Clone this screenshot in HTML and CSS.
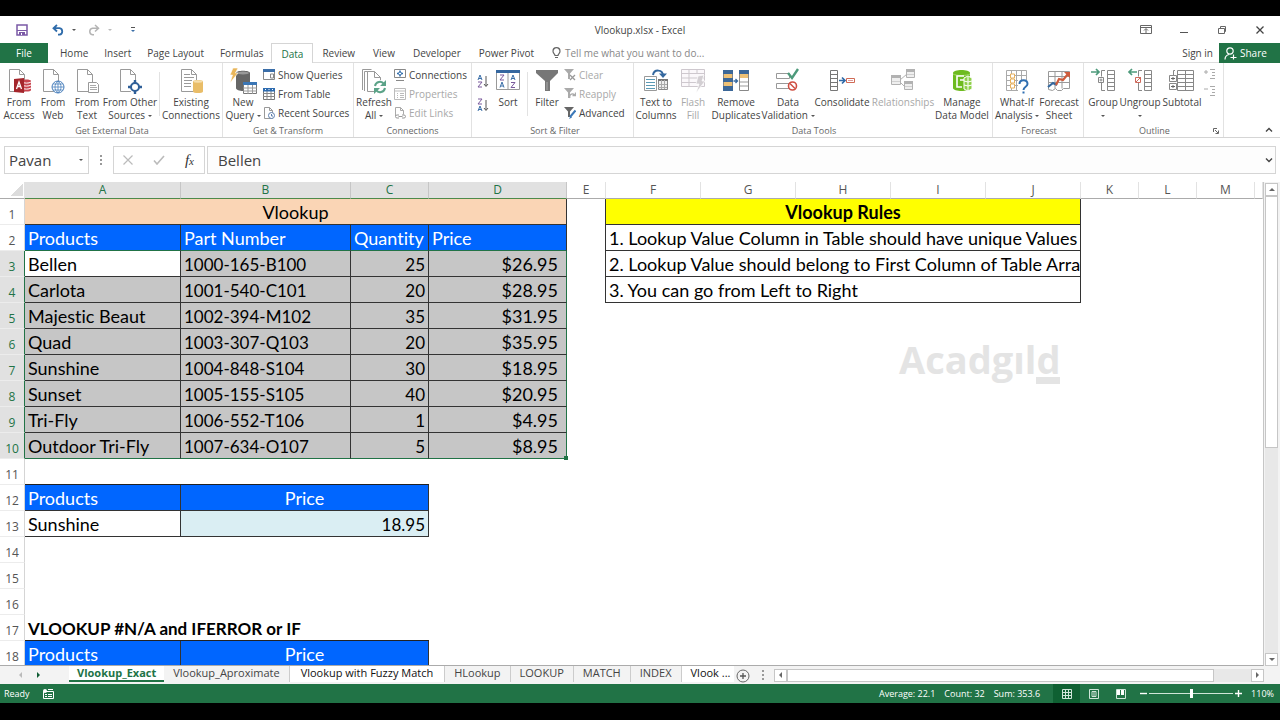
FILE: index.html
```html
<!DOCTYPE html>
<html lang="en">
<head>
    <meta charset="UTF-8">
    <title>Vlookup.xlsx - Excel</title>
    <link rel="stylesheet" href="styles.css">
</head>
<body>

<!-- shared shapes -->
<svg class="defs" width="0" height="0">
    <symbol id="page" viewBox="0 0 24 26">
        <path d="M2.5 1.5h10l5 5v17h-15z" fill="#fff" stroke="#9a9a9a"/>
        <path d="M12.500 1.500v5h5" fill="none" stroke="#9a9a9a"/>
    </symbol>
    <symbol id="mini-grid" viewBox="0 0 14 12">
        <path d="M.5.5h13v11H.5z" fill="#fff" stroke="#777"/>
        <path d="M0 0h14v3H0z" fill="#3b76b5"/>
        <path d="M5 3v9M9.500 3v9M0 6h14M0 9h14" stroke="#999" fill="none"/>
    </symbol>
    <symbol id="funnel" viewBox="0 0 24 26">
        <path d="M1 2h22v3l-8 8v10h-5V13L1 5z" fill="#777"/>
        <path d="M12 14v8" stroke="#aaa"/>
    </symbol>
</svg>

<header class="titlebar">
    <div class="quick">
        <button aria-label="Save"><svg width="12" height="12" viewBox="0 0 12 12"><path d="M1 1h10v10H1z" fill="#fff" stroke="#7b5aa6" stroke-width="1.500"/><path d="M1 6h10v1H1zM3 8h6v3H3z" fill="#7b5aa6"/><path d="M5 9h1v2H5z" fill="#fff"/></svg></button>
        <button class="undo" aria-label="Undo"><svg width="12" height="12" viewBox="0 0 12 12"><path d="M5 1L1.500 4.200 5 7.500M2 4.200h5.500a3.300 3.300 0 010 6.500H6" fill="none" stroke="#2f6cab" stroke-width="1.800"/></svg></button>
        <i class="caret"></i>
        <button class="redo" aria-label="Redo"><svg width="12" height="12" viewBox="0 0 12 12"><path d="M7 1l3.500 3.200L7 7.500M10 4.200H4.500a3.300 3.300 0 000 6.500H6" fill="none" stroke="#b4b4b4" stroke-width="1.500"/></svg></button>
        <i class="caret pale"></i>
        <button class="customize" aria-label="Customize"><svg width="6" height="6" viewBox="0 0 6 6"><path d="M1 .5h4" stroke="#555"/><path d="M1 3h4L3 5z" fill="#3b6fa8"/></svg></button>
    </div>
    <h1>Vlookup.xlsx - Excel</h1>
    <div class="window-buttons">
        <button aria-label="Ribbon options"><svg width="12" height="10" viewBox="0 0 12 10"><path d="M.5.5h11v8H.5zM.5 2.500h11M6 8V4M4 5.500l2-2 2 2" fill="none" stroke="#666"/></svg></button>
        <button aria-label="Minimize"><svg width="10" height="10" viewBox="0 0 10 10"><path d="M1 7.500h8" stroke="#555"/></svg></button>
        <button aria-label="Restore"><svg width="10" height="10" viewBox="0 0 10 10"><path d="M1.500 3.500h6v5h-6zM3.500 3V1.500h5v5H8" fill="none" stroke="#666"/></svg></button>
        <button aria-label="Close"><svg width="10" height="10" viewBox="0 0 10 10"><path d="M1.500 1.500l7 7M8.500 1.500l-7 7" stroke="#444" stroke-width="1.300"/></svg></button>
    </div>
</header>

<nav class="tabs">
    <button class="file">File</button>
    <button>Home</button>
    <button>Insert</button>
    <button>Page Layout</button>
    <button>Formulas</button>
    <button class="active">Data</button>
    <button>Review</button>
    <button>View</button>
    <button>Developer</button>
    <button>Power Pivot</button>
    <button class="tell"><svg width="9" height="12" viewBox="0 0 9 12"><path d="M3 8.500C3 7 1 6.500 1 4.200a3.500 3.500 0 017 0C8 6.500 6 7 6 8.500zM3 10.500h3" fill="none" stroke="#666" stroke-width="1.200"/></svg>Tell me what you want to do...</button>
    <span class="spacer"></span>
    <button class="signin">Sign in</button>
    <button class="share"><svg width="13" height="13" viewBox="0 0 13 13"><circle cx="6" cy="4" r="3.200" fill="none" stroke="#fff" stroke-width="1.200"/><path d="M1 12.500c0-3 2-4.500 4-5M6.500 10.500h6M9.500 7.500v5" fill="none" stroke="#fff" stroke-width="1.200"/></svg>Share</button>
</nav>

<section class="ribbon">
    <div class="group external">
        <div class="tools">
            <button class="big w34">
                <svg width="24" height="26" viewBox="0 0 24 26"><use href="#page"/><path d="M15 13c0-2 9-2 9 0v9c0 2-9 2-9 0z" fill="#c9444f"/><path d="M15 14c2 1.500 7 1.500 9 0M15 17c2 1.500 7 1.500 9 0M15 20c2 1.500 7 1.500 9 0" fill="none" stroke="#fff"/><path d="M7 11l10-1v15l-10-1z" fill="#a4262c"/><path d="M9.500 21l2.500-7 2.500 7M10.500 18.500h3" fill="none" stroke="#fff" stroke-width="1.300"/></svg>
                <span>From</span><span>Access</span>
            </button>
            <button class="big w34">
                <svg width="24" height="26" viewBox="0 0 24 26"><use href="#page"/><circle cx="17" cy="19" r="6" fill="#fff" stroke="#4a80bd"/><path d="M11 19h12M17 13v12M12 16h10M12 22h10M17 13c-4 3-4 9 0 12M17 13c4 3 4 9 0 12" fill="none" stroke="#4a80bd" stroke-width=".8"/></svg>
                <span>From</span><span>Web</span>
            </button>
            <button class="big w34">
                <svg width="24" height="26" viewBox="0 0 24 26"><use href="#page"/><path d="M13.500 14.500h8l2 2v8h-10z" fill="#fff" stroke="#999"/><path d="M15 17.500h6M15 19.500h7M15 21.500h7" stroke="#aaa"/></svg>
                <span>From</span><span>Text</span>
            </button>
            <button class="big w52">
                <svg width="24" height="26" viewBox="0 0 24 26"><use href="#page"/><circle cx="17" cy="19" r="6" fill="#fff"/><path d="M17 12v14M10 19h14" stroke="#2f5f98" stroke-width="2.400"/><circle cx="17" cy="19" r="4" fill="#fff" stroke="#2f5f98" stroke-width="2"/></svg>
                <span>From Other</span><span>Sources <i class="caret"></i></span>
            </button>
            <i class="rule"></i>
            <button class="big w56">
                <svg width="24" height="26" viewBox="0 0 24 26"><use href="#page"/><path d="M5 6.500h6M5 9.500h10M5 12.500h8M5 15.500h7M5 18.500h7" stroke="#999"/><path d="M14 13.500c0-2 10-2 10 0v10c0 2-10 2-10 0z" fill="#e9bd68"/><ellipse cx="19" cy="13.500" rx="4.500" ry="1.200" fill="#f6dfae"/></svg>
                <span>Existing</span><span>Connections</span>
            </button>
        </div>
        <h2>Get External Data</h2>
    </div>
    <div class="group transform">
        <div class="tools">
            <button class="big w40">
                <svg width="28" height="26" viewBox="0 0 28 26"><path d="M7 5c0-3 14-3 14 0v15c0 4-14 4-14 0z" fill="#666"/><ellipse cx="14" cy="5" rx="6" ry="1.500" fill="#999"/><path d="M4 0h5L6.500 5H9L1 15l2.500-8H1z" fill="#e9b65a" stroke="#fff" stroke-width=".6"/><use href="#mini-grid" x="14" y="14" width="14" height="12"/></svg>
                <span>New</span><span>Query <i class="caret"></i></span>
            </button>
            <div class="stack">
                <button><svg width="12" height="12" viewBox="0 0 12 12"><path d="M.5.5h11v10H.5zM7.500 5h3v4h-3z" fill="#fff" stroke="#888"/><path d="M0 0h12v3H0z" fill="#3b6ea8"/></svg>Show Queries</button>
                <button><svg width="12" height="12" viewBox="0 0 12 12"><path d="M.5.5h11v11H.5z" fill="#fff" stroke="#777"/><path d="M4 3v9M8 3v9M0 5.500h12M0 8.500h12" stroke="#888"/><path d="M0 0h12v3.500H0z" fill="#2e6cb0"/><path d="M2 1.500h1M5.500 1.500h1M9 1.500h1" stroke="#fff"/></svg>From Table</button>
                <button><svg width="12" height="12" viewBox="0 0 12 12"><path d="M1.500.5h5l3 3v8h-8zM6.500.5v3h3" fill="#fff" stroke="#999"/><circle cx="8.500" cy="8.500" r="3" fill="#fff" stroke="#5d7fae"/><path d="M8.500 7v2H10" fill="none" stroke="#5d7fae"/></svg>Recent Sources</button>
            </div>
        </div>
        <h2>Get &amp; Transform</h2>
    </div>
    <div class="group connections">
        <div class="tools">
            <button class="big w40">
                <svg width="26" height="26" viewBox="0 0 26 26"><path d="M1.500 22V1.500h9M3.500 23V3.500h9" fill="none" stroke="#999"/><path d="M6.500 3.500h7l6 6v14h-13z" fill="#fff" stroke="#999"/><path d="M13.500 3.500v6h6" fill="none" stroke="#999"/><circle cx="19" cy="19" r="7" fill="#fff"/><path d="M14 18a5 5 0 019-2M24 20a5 5 0 01-9 2" fill="none" stroke="#5ba388" stroke-width="2"/><path d="M25 12v6h-6zM13 26v-6h6z" fill="#5ba388"/></svg>
                <span>Refresh</span><span>All <i class="caret"></i></span>
            </button>
            <div class="stack">
                <button><svg width="12" height="12" viewBox="0 0 12 12"><path d="M.5.5h11v8H.5zM2 11.500h8" fill="#fff" stroke="#888"/><path d="M6 1.500v6M3 4.500h6" stroke="#2f6cab" stroke-width="1.400"/><circle cx="6" cy="4.500" r="1.500" fill="#fff" stroke="#2f6cab"/></svg>Connections</button>
                <button disabled><svg width="12" height="12" viewBox="0 0 12 12"><path d="M.5.5h11v11H.5zM.5 3h11M3 5.500h1M3 7.500h1M3 9.500h1M6 5.500h4M6 7.500h4M6 9.500h4" fill="none" stroke="#bbb"/></svg>Properties</button>
                <button disabled><svg width="12" height="12" viewBox="0 0 12 12"><path d="M1.500 9V.5h5l3 3v4M6.500.5v3h3" fill="none" stroke="#aaa"/><path d="M5 8H3a1.500 1.500 0 000 3h2M8 8h2a1.500 1.500 0 010 3H8M4.500 9.500h4" fill="none" stroke="#999"/></svg>Edit Links</button>
            </div>
        </div>
        <h2>Connections</h2>
    </div>
    <div class="group sort">
        <div class="tools">
            <div class="pair">
                <button aria-label="Sort A to Z"><svg width="12" height="14" viewBox="0 0 12 14"><path d="M1 6l2-5 2 5M1.600 4.500h2.800" fill="none" stroke="#3b6fa8"/><path d="M1 8h4l-4 5h4" fill="none" stroke="#7a5a9c"/><path d="M9 2v10M7 10l2 2.500 2-2.500" fill="none" stroke="#555"/></svg></button>
                <button aria-label="Sort Z to A"><svg width="12" height="14" viewBox="0 0 12 14"><path d="M1 1h4L1 6h4" fill="none" stroke="#7a5a9c"/><path d="M1 13l2-5 2 5M1.600 11.500h2.800" fill="none" stroke="#3b6fa8"/><path d="M9 2v10M7 10l2 2.500 2-2.500" fill="none" stroke="#555"/></svg></button>
            </div>
            <button class="big w34">
                <svg width="24" height="26" viewBox="0 0 24 26"><path d="M.5 2.500h23v19H.5zM12 5v16" fill="#fff" stroke="#999"/><path d="M0 2h24v3H0z" fill="#35679f"/><path d="M4 7h4l-4 5h4M15 14.500h4l-4 5h4" fill="none" stroke="#7a5a9c"/><path d="M4 19.500l2-5.500 2 5.500M4.600 18h2.800M15 12l2-5 2 5M15.600 10.500h2.800" fill="none" stroke="#3b6fa8"/></svg>
                <span>Sort</span>
            </button>
            <i class="rule"></i>
            <button class="big w34">
                <svg width="24" height="26"><use href="#funnel"/></svg>
                <span>Filter</span>
            </button>
            <div class="stack">
                <button disabled><svg width="12" height="12" viewBox="0 0 12 12"><path d="M0 0h10L6 4.500V10H4V4.500z" fill="#aaa"/><path d="M6 6l5 5M11 6l-5 5" stroke="#999" stroke-width="1.300"/></svg>Clear</button>
                <button disabled><svg width="12" height="12" viewBox="0 0 12 12"><path d="M0 0h10L6 4.500V10H4V4.500z" fill="#aaa"/><path d="M11.200 7.500A2.800 2.800 0 106 10M11.500 4.500v3h-3" fill="none" stroke="#aaa" stroke-width="1.300"/></svg>Reapply</button>
                <button><svg width="12" height="12" viewBox="0 0 12 12"><path d="M0 0h10L6 4.500V10H4V4.500z" fill="#666"/><path d="M11.500 3.500L6 10" stroke="#3b78b8" stroke-width="2"/><path d="M6.500 9L5 12l3-1.500z" fill="#3b78b8"/></svg>Advanced</button>
            </div>
        </div>
        <h2>Sort &amp; Filter</h2>
    </div>
    <div class="group data-tools">
        <div class="tools">
            <button class="big w40">
                <svg width="26" height="26" viewBox="0 0 26 26"><path d="M1.500 8.500h12v14h-12z" fill="#fff" stroke="#999"/><path d="M3 11.500h9M3 14.500h9M3 17.500h9M3 20.500h9" stroke="#5b9ab5"/><path d="M15.500 11.500h9v10h-9z" fill="#eee" stroke="#888"/><path d="M15 11h10v2H15z" fill="#777"/><path d="M15 16.500h9M15 19.500h9M18.500 12v9M21.500 12v9" stroke="#aaa"/><path d="M10 7c1-6 10-6 10 1" fill="none" stroke="#34689f" stroke-width="2"/><path d="M16 5.500h8L20 10z" fill="#34689f"/></svg>
                <span>Text to</span><span>Columns</span>
            </button>
            <button class="big w34" disabled>
                <svg width="26" height="26" viewBox="0 0 26 26"><path d="M1.500 1.500h23v17h-23zM1.500 5.500h23M1.500 10h23M1.500 14.500h23M9 1.500v17M17 1.500v4" fill="#fbf8fb" stroke="#c9c3c9"/><path d="M18 8l6-1-2 6h3l-9 12 3-9h-3z" fill="#cfcacf" stroke="#fff" stroke-width=".7"/></svg>
                <span>Flash</span><span>Fill</span>
            </button>
            <button class="big w52">
                <svg width="26" height="26" viewBox="0 0 26 26"><path d="M.5 2.500h9v20h-9zM16.500 2.500h9v20h-9z" fill="#fff" stroke="#888"/><path d="M0 2h10v4H0zM0 10h10v4H0zM0 18h10v5H0zM16 2h10v4H16z" fill="#3b6798"/><path d="M1 6h8v4H1zM1 14h8v4H1zM17 6h8v4h-8z" fill="#edc176"/><path d="M17 14h8M17 18h8" stroke="#999"/><path d="M10.500 13h4M12.500 11l2 2-2 2" fill="none" stroke="#34689f" stroke-width="1.300"/></svg>
                <span>Remove</span><span>Duplicates</span>
            </button>
            <button class="big w52">
                <svg width="26" height="26" viewBox="0 0 26 26"><path d="M1.500 5.500h13v5h-13zM1.500 15.500h13v5h-13z" fill="#fff" stroke="#999"/><path d="M13 5l4 5 6-9" fill="none" stroke="#4d9a7b" stroke-width="2.400"/><circle cx="17.500" cy="18" r="4" fill="#fff" stroke="#cf4e42" stroke-width="1.600"/><path d="M15 15.500l5 5" stroke="#cf4e42" stroke-width="1.500"/></svg>
                <span>Data</span><span>Validation <i class="caret"></i></span>
            </button>
            <button class="big w56">
                <svg width="26" height="26" viewBox="0 0 26 26"><path d="M1.500 2.500h7v20h-7zM1.500 6.500h7M1.500 10.500h7M1.500 14.500h7M1.500 18.500h7" fill="#fff" stroke="#777"/><path d="M10 12.500h6M13 9.500l3 3-3 3" fill="none" stroke="#2f6aa8" stroke-width="1.700"/><path d="M17.500 10.500h8v4h-8z" fill="#fff" stroke="#d06a55"/><path d="M19 12.500h5" stroke="#d99"/></svg>
                <span>Consolidate</span>
            </button>
            <button class="big w66" disabled>
                <svg width="26" height="26" viewBox="0 0 26 26"><path d="M10 12l7-6M10 14l4 4" stroke="#aaa"/><path d="M1.500 7.500h9v9h-9zM16.500 1.500h8v8h-8zM14.500 13.500h8v8h-8z" fill="#eee" stroke="#aaa"/><path d="M1 7h10v3H1zM16 1h9v3h-9zM14 13h9v3h-9z" fill="#aaa"/><path d="M2 13.500h8M17 6.500h7M15 18.500h7" stroke="#ccc"/></svg>
                <span>Relationships</span>
            </button>
            <button class="big w52">
                <svg width="24" height="26" viewBox="0 0 24 26"><path d="M3 5c0-4 17-4 17 0v15c0 4-17 4-17 0z" fill="#6ebb1f"/><path d="M3 6c3 2 14 2 17 0" fill="none" stroke="#a9dc72"/><path d="M14 8h-7v11h5M10 12h5v5" fill="none" stroke="#fff" stroke-width="1.600"/><path d="M14 10l4-2 4 2v11l-4 2-4-2z" fill="#8fd04a" stroke="#fff"/><path d="M14 13l4 1 4-1M14 17l4 1 4-1M18 9v14" fill="none" stroke="#fff"/></svg>
                <span>Manage</span><span>Data Model</span>
            </button>
        </div>
        <h2>Data Tools</h2>
    </div>
    <div class="group forecast">
        <div class="tools">
            <button class="big w44">
                <svg width="24" height="26" viewBox="0 0 24 26"><path d="M1.500 2.500h20v20h-20zM1.500 7.500h20M1.500 12.500h20M1.500 17.500h20M6.500 2.500v20M11.500 2.500v20M16.500 2.500v20" fill="#fff" stroke="#aaa"/><path d="M5.500 6h4v4h-4zM5.500 11h4v4h-4zM5.500 16h4v4h-4z" fill="#fff" stroke="#e8b05c"/><path d="M13 12h10v13H13z" fill="#fff"/><path d="M14.500 16c0-5 8-5 8 0 0 3-4 2.500-4 6" fill="none" stroke="#2f6eb0" stroke-width="2"/><path d="M17.500 23.500h2v2h-2z" fill="#2f6eb0"/></svg>
                <span>What-If</span><span>Analysis <i class="caret"></i></span>
            </button>
            <button class="big w40">
                <svg width="24" height="26" viewBox="0 0 24 26"><path d="M1.500 3.500h21v17h-6l-2 2h-4l-2-2-3 2-4-1zM1.500 8.500h21M1.500 14.500h21M8 3.500v17M15 3.500v17" fill="#fff" stroke="#999"/><path d="M1 19l5-4 4 2" fill="none" stroke="#34689f" stroke-width="2.200"/><path d="M9 17l3-6 4 1 5-6" fill="none" stroke="#cf5c3c" stroke-width="2.200"/><path d="M17 4h6v6z" fill="#cf5c3c"/></svg>
                <span>Forecast</span><span>Sheet</span>
            </button>
        </div>
        <h2>Forecast</h2>
    </div>
    <div class="group outline">
        <div class="tools">
            <button class="big w34">
                <svg width="26" height="26" viewBox="0 0 26 26"><path d="M1 4h8M6 1l3 3-3 3" fill="none" stroke="#4d9a7b" stroke-width="1.700"/><path d="M17.500 2.500h7v20h-7zM17.500 6.500h7M17.500 10.500h7M17.500 14.500h7M17.500 18.500h7M15 2.500h-3.500v6M11.500 15v7.500H15M8.500 9.500h5v5h-5zM9.500 12h3M11 10.500v3" fill="none" stroke="#888"/></svg>
                <span>Group</span><span><i class="caret"></i></span>
            </button>
            <button class="big w40">
                <svg width="26" height="26" viewBox="0 0 26 26"><path d="M2 4h8M5 1L2 4l3 3" fill="none" stroke="#4d9a7b" stroke-width="1.700"/><path d="M17.500 2.500h7v20h-7zM17.500 6.500h7M17.500 10.500h7M17.500 14.500h7M17.500 18.500h7M15 2.500h-3.500v6M11.500 15v7.500H15" fill="none" stroke="#888"/><path d="M8.500 9.500h5v5h-5zM9 14l5-5" fill="none" stroke="#cf6a5c"/></svg>
                <span>Ungroup</span><span><i class="caret"></i></span>
            </button>
            <button class="big w44">
                <svg width="26" height="26" viewBox="0 0 26 26"><path d="M8.500 2.500h16v20h-16zM8.500 6.500h16M8.500 10.500h16M8.500 14.500h16M8.500 18.500h16M16.500 2.500v20M6 2.500H4.500V7" fill="none" stroke="#888"/><path d="M.5 7.500h7v6h-7zM.5 15.500h7v6h-7z" fill="#fff" stroke="#888"/><path d="M2 10.500h4M4 9v3M2 18.500h4M4 17v3" stroke="#666"/></svg>
                <span>Subtotal</span>
            </button>
            <div class="pair detail">
                <button aria-label="Show detail"><svg width="12" height="12" viewBox="0 0 12 12"><path d="M0 4h4M2 2v4M6 1.500h5M8 4.500h3M8 7.500h3M6 10.500h5" stroke="#aaa"/></svg></button>
                <button aria-label="Hide detail"><svg width="12" height="12" viewBox="0 0 12 12"><path d="M0 4h4M6 1.500h5M8 4.500h3M8 7.500h3M6 10.500h5" stroke="#aaa"/></svg></button>
            </div>
        </div>
        <h2>Outline</h2>
        <svg class="launcher" width="6" height="6" viewBox="0 0 6 6"><path d="M.5 4V.5H4M2 2l3 3M5.500 2.500v3h-3" fill="none" stroke="#666"/></svg>
    </div>
    <button class="collapse" aria-label="Collapse ribbon"><svg width="8" height="6" viewBox="0 0 8 6"><path d="M1 4.500l3-3 3 3" fill="none" stroke="#444" stroke-width="1.400"/></svg></button>
</section>

<section class="formula-bar">
    <div class="name-box"><input type="text" value="Pavan" aria-label="Name box"><i class="caret"></i></div>
    <i class="dots"></i>
    <div class="formula-buttons">
        <button aria-label="Cancel"><svg width="10" height="10" viewBox="0 0 10 10"><path d="M.5.5l9 9M9.500.5l-9 9" stroke="#bbb" stroke-width="1.200"/></svg></button>
        <button aria-label="Enter"><svg width="12" height="10" viewBox="0 0 12 10"><path d="M1 5.500L4 9l7-8" fill="none" stroke="#bbb" stroke-width="1.600"/></svg></button>
        <button class="fx">f<small>x</small></button>
    </div>
    <div class="formula">
        <input type="text" value="Bellen" aria-label="Formula">
        <svg width="8" height="6" viewBox="0 0 8 6"><path d="M1 1.500l3 3 3-3" fill="none" stroke="#444" stroke-width="1.400"/></svg>
    </div>
</section>

<main class="workspace">
    <div class="sheet">
        <table>
            <colgroup>
                <col class="c-num"><col class="c-a"><col class="c-b"><col class="c-c"><col class="c-d"><col class="c-e">
                <col class="c-wide"><col class="c-wide"><col class="c-wide"><col class="c-wide"><col class="c-wide">
                <col class="c-std"><col class="c-std"><col class="c-std"><col>
            </colgroup>
            <thead>
                <tr>
                    <th class="corner"></th>
                    <th class="on">A</th><th class="on">B</th><th class="on">C</th><th class="on">D</th>
                    <th>E</th><th>F</th><th>G</th><th>H</th><th>I</th><th>J</th><th>K</th><th>L</th><th>M</th><th></th>
                </tr>
            </thead>
            <tbody>
                <tr><th>1</th><td colspan="4" class="box peach center">Vlookup</td><td class="before"></td><td colspan="5" class="box yellow center bold">Vlookup Rules</td></tr>
                <tr class="head"><th>2</th><td class="box blue">Products</td><td class="box blue">Part Number</td><td class="box blue">Quantity</td><td class="box blue">Price</td><td class="before"></td><td colspan="5" class="box">1. Lookup Value Column in Table should have unique Values</td></tr>
                <tr class="sel"><th>3</th><td class="box current">Bellen</td><td class="box code">1000-165-B100</td><td class="box num">25</td><td class="box money">$26.95</td><td class="before"></td><td colspan="5" class="box rule-cell">2. Lookup Value should belong to First Column of Table Array</td></tr>
                <tr class="sel"><th>4</th><td class="box">Carlota</td><td class="box code">1001-540-C101</td><td class="box num">20</td><td class="box money">$28.95</td><td class="before"></td><td colspan="5" class="box rule-cell">3. You can go from Left to Right</td></tr>
                <tr class="sel"><th>5</th><td class="box">Majestic Beaut</td><td class="box code">1002-394-M102</td><td class="box num">35</td><td class="box money">$31.95</td></tr>
                <tr class="sel"><th>6</th><td class="box">Quad</td><td class="box code">1003-307-Q103</td><td class="box num">20</td><td class="box money">$35.95</td></tr>
                <tr class="sel"><th>7</th><td class="box">Sunshine</td><td class="box code">1004-848-S104</td><td class="box num">30</td><td class="box money">$18.95</td></tr>
                <tr class="sel"><th>8</th><td class="box">Sunset</td><td class="box code">1005-155-S105</td><td class="box num">40</td><td class="box money">$20.95</td></tr>
                <tr class="sel"><th>9</th><td class="box">Tri-Fly</td><td class="box code">1006-552-T106</td><td class="box num">1</td><td class="box money">$4.95</td></tr>
                <tr class="sel last"><th>10</th><td class="box">Outdoor Tri-Fly</td><td class="box code">1007-634-O107</td><td class="box num">5</td><td class="box money handle">$8.95</td></tr>
                <tr class="above"><th>11</th><td></td><td colspan="2"></td></tr>
                <tr><th>12</th><td class="box blue">Products</td><td colspan="2" class="box blue center">Price</td></tr>
                <tr><th>13</th><td class="box">Sunshine</td><td colspan="2" class="box ice num">18.95</td></tr>
                <tr><th>14</th></tr>
                <tr><th>15</th></tr>
                <tr><th>16</th></tr>
                <tr class="above"><th>17</th><td colspan="3" class="bold note">VLOOKUP #N/A and IFERROR or IF</td></tr>
                <tr><th>18</th><td class="box blue">Products</td><td colspan="2" class="box blue center">Price</td></tr>
            </tbody>
        </table>
        <div class="watermark">Acadgıl<span>d</span></div>
    </div>
    <div class="vscroll">
        <button aria-label="Scroll up"><i class="arrow up"></i></button>
        <div class="thumb"></div>
        <div class="trough"></div>
        <button aria-label="Scroll down"><i class="arrow down"></i></button>
    </div>
</main>

<footer class="sheet-tabs">
    <div class="tab-nav"><i class="arrow left pale"></i><i class="arrow right green"></i></div>
    <button class="active">Vlookup_Exact</button>
    <button>Vlookup_Aproximate</button>
    <button class="white">Vlookup with Fuzzy Match</button>
    <button>HLookup</button>
    <button>LOOKUP</button>
    <button>MATCH</button>
    <button>INDEX</button>
    <button class="white more">Vlook ...</button>
    <button class="add" aria-label="New sheet"><svg width="14" height="14" viewBox="0 0 14 14"><circle cx="7" cy="7" r="6" fill="none" stroke="#666"/><path d="M4 7h6M7 4v6" stroke="#555" stroke-width="1.300"/></svg></button>
    <i class="dots"></i>
    <div class="hscroll">
        <button aria-label="Scroll left"><i class="arrow left"></i></button>
        <div class="thumb"></div>
        <div class="trough"></div>
        <button aria-label="Scroll right"><i class="arrow right"></i></button>
    </div>
</footer>

<div class="status">
    <span>Ready</span>
    <svg class="macro" width="11" height="10" viewBox="0 0 11 10"><path d="M.5 2.500h10v7H.5zM2 5.500h2M5 5.500h4M2 7.500h2M5 7.500h4M5 .5h5" fill="none" stroke="#fff"/><circle cx="2" cy="2" r="2" fill="#fff"/></svg>
    <span class="spacer"></span>
    <span class="stat">Average: 22.1</span>
    <span class="stat">Count: 32</span>
    <span class="stat">Sum: 353.6</span>
    <button class="view active" aria-label="Normal"><svg width="10" height="10" viewBox="0 0 10 10"><path d="M.5.5h9v9h-9zM3.500.5v9M6.500.5v9M.5 3.500h9M.5 6.500h9" fill="none" stroke="#cfe5d8"/></svg></button>
    <button class="view" aria-label="Page layout"><svg width="10" height="10" viewBox="0 0 10 10"><path d="M.5.5h9v9h-9zM3 2.500h4v5H3zM4 4h2M4 6h2" fill="none" stroke="#cfe5d8"/></svg></button>
    <button class="view" aria-label="Page break"><svg width="10" height="10" viewBox="0 0 10 10"><path d="M.5.5h9v9h-9z" fill="none" stroke="#cfe5d8"/><path d="M1 1h3v5H1zM5 1h3v5H5z" fill="#fff"/></svg></button>
    <button class="step" aria-label="Zoom out"><svg width="7" height="7" viewBox="0 0 7 7"><path d="M0 3.500h7" stroke="#fff" stroke-width="1.400"/></svg></button>
    <input type="range" min="0" max="100" value="51" aria-label="Zoom">
    <button class="step" aria-label="Zoom in"><svg width="7" height="7" viewBox="0 0 7 7"><path d="M0 3.500h7M3.500 0v7" stroke="#fff" stroke-width="1.400"/></svg></button>
    <span class="percent">110%</span>
</div>

</body>
</html>
```

FILE: styles.css
```css
* {
    box-sizing: border-box;
}

body {
    margin: 0;
    padding: 16px 0 17px;
    height: 100vh;
    display: flex;
    flex-direction: column;
    background: #000;
    color: #444;
    font-family: "Open Sans", "Noto Sans", sans-serif;
    font-size: 10px;
    overflow: hidden;
}

button, input {
    font: inherit;
    color: inherit;
    background: none;
    border: 0;
    padding: 0;
    margin: 0;
    white-space: nowrap;
}

button:disabled {
    color: #a8a8a8;
}

svg {
    flex: none;
    display: block;
}

.defs {
    position: absolute;
}

.spacer {
    flex: 1;
}

.caret {
    display: inline-block;
    border: 2px solid transparent;
    border-top-color: #555;
    border-bottom: 0;
    vertical-align: middle;
}

.caret.pale {
    border-top-color: #bbb;
}

.dots {
    width: 2px;
    height: 10px;
    background: repeating-linear-gradient(#999 0 2px, transparent 2px 4px);
}

/* title bar */
.titlebar {
    flex: none;
    height: 27px;
    display: grid;
    grid-template-columns: 1fr auto 1fr;
    align-items: center;
    background: #fff;
}

.titlebar h1 {
    margin: 0;
    font-size: 10px;
    font-weight: normal;
}

.quick, .window-buttons {
    display: flex;
    align-items: center;
}

.quick {
    padding-left: 16px;
}

.quick .undo { margin: 0 8px 0 24px; }
.quick .redo { margin: 0 8px 0 12px; }
.quick .customize { margin-left: 18px; }

.window-buttons {
    justify-content: flex-end;
    padding-right: 1px;
}

.window-buttons button {
    width: 38px;
    display: flex;
    justify-content: center;
}

/* ribbon tabs */
.tabs {
    flex: none;
    height: 20px;
    display: flex;
    background: #fff;
    border-bottom: 1px solid #ddd;
}

.tabs button {
    padding: 0 8px;
    height: 20px;
}

.tabs .file {
    width: 48px;
    margin-right: 4px;
    background: #217346;
    color: #fff;
}

.tabs .active {
    padding: 0 9px;
    border: 1px solid #d5d5d5;
    border-bottom: 0;
    background: #fff;
    color: #217346;
}

.tabs .active ~ button {
    padding: 0 9px;
}

.tabs .tell {
    display: flex;
    align-items: center;
    gap: 4px;
    color: #888;
}

.tabs .active ~ .signin {
    padding: 0 6px;
}

.tabs .active ~ .share {
    display: flex;
    align-items: center;
    gap: 3px;
    width: 61px;
    padding: 0 5px;
    background: #217346;
    color: #fff;
}

/* ribbon */
.ribbon {
    flex: none;
    height: 75px;
    display: flex;
    background: #fff;
    border-bottom: 1px solid #d5d5d5;
}

.group {
    position: relative;
    flex: none;
    display: flex;
    flex-direction: column;
    justify-content: space-between;
    padding: 5px 0 0 2px;
    border-right: 1px solid #e2e2e2;
}

.group.external { width: 223px; }
.group.transform { width: 131px; padding-left: 0; }
.group.connections { width: 118px; padding-left: 0; }
.group.sort { width: 162px; padding-left: 5px; }
.group.data-tools { width: 359px; }
.group.forecast { width: 91px; }
.group.outline { width: 140px; }

.group h2 {
    margin: 0;
    font-size: 9px;
    line-height: 13px;
    font-weight: normal;
    text-align: center;
    color: #666;
}

.tools {
    display: flex;
}

.big {
    display: flex;
    flex-direction: column;
    align-items: center;
    line-height: 13px;
    flex: none;
}

.big svg {
    margin-bottom: 2px;
}

.big:disabled svg {
    opacity: 0.9;
}

.w34 { width: 34px; }
.w40 { width: 40px; }
.w44 { width: 44px; }
.w52 { width: 52px; }
.w56 { width: 56px; }
.w66 { width: 66px; }

.rule {
    width: 1px;
    height: 44px;
    margin: 4px 3px;
    background: #e2e2e2;
}

.sort .rule {
    margin: 4px 2px;
}

.stack {
    display: flex;
    flex-direction: column;
    margin-top: -3px;
}

.stack button {
    display: flex;
    align-items: center;
    gap: 3px;
    height: 19px;
}

.pair {
    display: flex;
    flex-direction: column;
    gap: 10px;
    padding: 6px 2px 0 0;
}

.pair.detail {
    gap: 5px;
    padding: 0;
}

.launcher {
    position: absolute;
    right: 4px;
    bottom: 3px;
}

.collapse {
    margin-left: auto;
    padding: 0 7px 4px 0;
    align-self: flex-end;
}

/* formula bar */
.formula-bar {
    flex: none;
    height: 44px;
    display: flex;
    align-items: center;
    padding: 0 4px;
    background: #fff;
    font-size: 15px;
}

.name-box, .formula-buttons, .formula {
    display: flex;
    align-items: center;
    height: 28px;
    border: 1px solid #d5d5d5;
}

.name-box {
    width: 85px;
    padding: 0 5px 0 4px;
}

.name-box input {
    flex: 1;
    min-width: 0;
}

.formula-bar .dots {
    margin: 0 11px;
}

.formula-buttons {
    width: 92px;
    justify-content: space-between;
    padding: 0 10px 0 9px;
}

.formula-buttons .fx {
    font: italic 15px "Liberation Serif", serif;
    color: #333;
}

.fx small {
    font-size: 11px;
}

.formula {
    flex: 1;
    margin-left: 2px;
    padding: 0 2px 0 10px;
    background: #fdfdfd;
}

.formula input {
    flex: 1;
}

/* grid */
.workspace {
    flex: 1;
    min-height: 0;
    display: flex;
    background: #fff;
}

.sheet {
    position: relative;
    flex: 1;
    overflow: hidden;
    border-right: 1px solid #c6c6c6;
    border-bottom: 1px solid #ababab;
}

table {
    width: 100%;
    table-layout: fixed;
    border-collapse: separate;
    border-spacing: 0;
    font-family: Lato, "Open Sans", sans-serif;
    font-size: 18px;
    font-variant-ligatures: none;
    color: #000;
}

.c-num { width: 25px; }
.c-a { width: 156px; }
.c-b { width: 170px; }
.c-c { width: 78px; }
.c-d { width: 138px; }
.c-e { width: 39px; }
.c-wide { width: 95px; }
.c-std { width: 58px; }

th {
    padding: 0;
    font-family: "Open Sans", sans-serif;
    font-size: 12px;
    font-weight: normal;
    color: #555;
}

thead th {
    height: 17px;
    line-height: 16px;
    border-right: 1px solid #e2e2e2;
    border-bottom: 1px solid #ababab;
}

thead .on {
    background: #e1e1e1;
    border-right-color: #c6c6c6;
    border-bottom-color: #4d8a4a;
    color: #217346;
}

thead .corner {
    background: linear-gradient(135deg, transparent 50%, #dcdcdc 50%) 10px 2px / 13px 12px no-repeat;
}

tbody th {
    border-right: 1px solid #d5d5d5;
    border-bottom: 1px solid #ececec;
    line-height: 19px;
    padding-top: 6px;
}

td {
    height: 26px;
    padding: 2px 0 0 3px;
    line-height: 23px;
    white-space: nowrap;
    overflow: hidden;
}

.box {
    border-right: 1px solid #333;
    border-bottom: 1px solid #333;
}

.before { border-right: 1px solid #333; }
.above td { border-bottom: 1px solid #222; }
.center { text-align: center; padding-left: 0; }
.bold { font-weight: bold; }
.code, .num, .note { font-size: 17px; }
.num { text-align: right; padding-right: 3px; }
.money { text-align: right; padding-right: 8px; }
.peach { background: #fad5b5; }
.yellow { background: #ff0; }
.blue { background: #06f; color: #fff; }
.ice { background: #daeef3; }

.head .blue {
    border-bottom-color: #217346;
}

.sel th {
    background: #e1e1e1;
    border-right-color: #217346;
    color: #217346;
}

.sel td.box {
    background: #c6c6c6;
}

.sel td.current, .sel td.rule-cell {
    background: #fff;
}

.sel .money {
    border-right-color: #217346;
}

.last td {
    border-bottom: 1px solid #217346;
}

.handle {
    position: relative;
    overflow: visible;
}

.handle::after {
    content: "";
    position: absolute;
    right: -2px;
    bottom: -2px;
    width: 4px;
    height: 4px;
    background: #217346;
}

.watermark {
    position: absolute;
    left: 899px;
    top: 149px;
    line-height: 56px;
    font-size: 38px;
    font-weight: bold;
    color: #e4e4e4;
}

.watermark span {
    display: inline-block;
    height: 53px;
    border-bottom: 7px solid #e4e4e4;
}

/* scroll bars */
.vscroll {
    flex: none;
    width: 16px;
    padding: 1px 2px 0 1px;
    display: flex;
    flex-direction: column;
    background: #f3f3f3;
}

.vscroll button, .hscroll button {
    flex: none;
    width: 13px;
    height: 13px;
    display: flex;
    align-items: center;
    justify-content: center;
    border: 1px solid #c6c6c6;
    background: #fff;
}

.thumb {
    border: 1px solid #c6c6c6;
    background: #fff;
}

.trough {
    background: #e8e8e8;
}

.vscroll .thumb { flex: 55; }
.vscroll .trough { flex: 45; }

.arrow {
    border: 3px solid transparent;
}

.arrow.up { border-bottom-color: #666; border-top: 0; }
.arrow.down { border-top-color: #666; border-bottom: 0; }
.arrow.left { border-right-color: #666; border-left: 0; }
.arrow.right { border-left-color: #666; border-right: 0; }
.arrow.pale { border-right-color: #bbb; }
.arrow.green { border-left-color: #0f5c33; }

/* sheet tabs */
.sheet-tabs {
    flex: none;
    height: 18px;
    display: flex;
    background: #f3f3f3;
    font-size: 11px;
}

.tab-nav {
    width: 69px;
    display: flex;
    align-items: center;
    gap: 15px;
    padding-left: 19px;
}

.sheet-tabs > button {
    height: 16px;
    padding: 0 9px 3px;
    line-height: 13px;
    border-right: 1px solid #ccc;
}

.sheet-tabs > .active {
    padding: 0 8px 1px;
    border-right: 0;
    border-bottom: 2px solid #217346;
    background: #fff;
    font-weight: bold;
    color: #217346;
}

.sheet-tabs > .white {
    padding: 0 11px 3px;
    background: #fff;
    color: #111;
}

.sheet-tabs > .more, .sheet-tabs > .add {
    border-right: 0;
}

.sheet-tabs > .more {
    padding: 0 4px 3px 9px;
}

.sheet-tabs > .add {
    padding: 2px 6px 0 2px;
    height: 18px;
}

.sheet-tabs .dots {
    align-self: center;
    margin: 0 10px 0 6px;
}

.hscroll {
    flex: 1;
    display: flex;
    align-items: center;
    padding-right: 16px;
}

.hscroll .thumb, .hscroll .trough {
    height: 13px;
}

.hscroll .thumb { flex: 92; }
.hscroll .trough { flex: 8; }

/* status bar */
.status {
    flex: none;
    height: 19px;
    display: flex;
    align-items: center;
    padding: 0 6px 0 4px;
    background: #217346;
    color: #fff;
    font-size: 9px;
}

.macro {
    margin-left: 13px;
}

.stat {
    margin-right: 9px;
}

.view {
    display: flex;
    align-items: center;
    justify-content: center;
    width: 27px;
    height: 19px;
}

.view.active {
    background: #0f6032;
    margin-left: 4px;
}

.step {
    margin: 0 2px;
}

.view + .step {
    margin-left: 6px;
}

.status input {
    appearance: none;
    width: 84px;
    height: 12px;
    background: linear-gradient(#cfe5d8, #cfe5d8) center / 100% 1px no-repeat;
}

.status input::-webkit-slider-thumb {
    appearance: none;
    width: 3px;
    height: 9px;
    background: #fff;
}

.percent {
    margin-left: 7px;
}
```
